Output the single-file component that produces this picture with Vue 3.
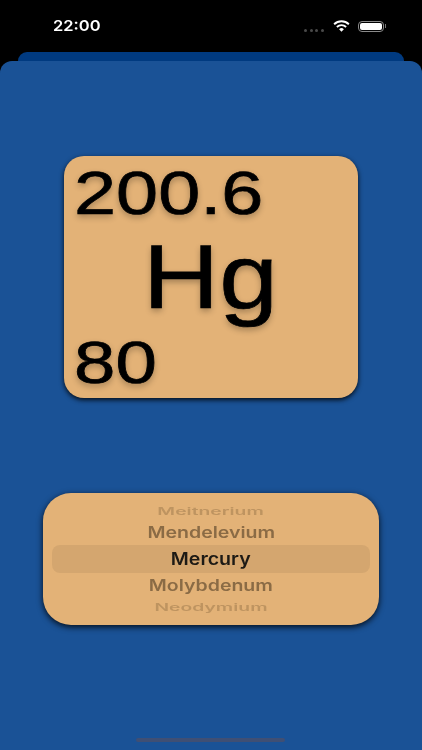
<script setup>
const rows = [
  { name: 'Meitnerium', cls: 'far top' },
  { name: 'Mendelevium', cls: 'near' },
  { name: 'Mercury', cls: 'picked' },
  { name: 'Molybdenum', cls: 'near low' },
  { name: 'Neodymium', cls: 'far bottom' }
]
</script>

<template>
  <div class="screen">
    <!--status bar-->
    <div class="status">
      <span class="time">22:00</span>
      <div class="status-right">
        <div class="dots"><i></i><i></i><i></i><i></i></div>
        <svg class="wifi" width="17" height="12" viewBox="0 0 18 13">
          <path d="M1 4.6 A11.5 11.5 0 0 1 17 4.6" fill="none" stroke="#fff" stroke-width="2" />
          <path d="M4 7.6 A7.2 7.2 0 0 1 14 7.6" fill="none" stroke="#fff" stroke-width="2" />
          <path d="M6.4 10 A3.6 3.6 0 0 1 11.6 10 L9 12.6 Z" fill="#fff" />
        </svg>
        <div class="battery"><div class="level"></div></div>
        <div class="nub"></div>
      </div>
    </div>

    <!--stacked sheets-->
    <div class="back-sheet"></div>
    <div class="sheet">
      <div class="card">
        <span class="mass">200.6</span>
        <span class="symbol">Hg</span>
        <span class="number">80</span>
      </div>

      <div class="picker">
        <div v-for="r in rows" :key="r.name" class="row" :class="r.cls">
          <span>{{ r.name }}</span>
        </div>
      </div>

      <div class="home"></div>
    </div>
  </div>
</template>

<style>
body {
  margin: 0;
  background: #000;
}
</style>

<style scoped>
.screen {
  width: 422px;
  height: 750px;
  background: #000;
  display: flex;
  flex-direction: column;
  overflow: hidden;
}

.status {
  height: 52px;
  display: flex;
  justify-content: space-between;
  align-items: flex-start;
  padding: 17px 36px 0 53px;
  box-sizing: border-box;
}

.time {
  color: #fff;
  font-family: Inter, "Liberation Sans", sans-serif;
  font-size: 15px;
  font-weight: 600;
  line-height: 18px;
  display: inline-block;
  transform: scaleX(1.1);
  transform-origin: left center;
}

.status-right {
  display: flex;
  align-items: center;
  height: 18px;
}

.dots {
  display: flex;
  gap: 2.5px;
  margin-top: 9px;
  margin-right: 9px;
}

.dots i {
  width: 3px;
  height: 3px;
  border-radius: 50%;
  background: #4a4a4a;
}

.wifi {
  margin-right: 8px;
}

.battery {
  width: 22px;
  height: 7px;
  border: 1px solid #8a8a8a;
  border-radius: 4px;
  padding: 1px;
  box-sizing: content-box;
}

.level {
  width: 100%;
  height: 100%;
  background: #fff;
  border-radius: 2px;
}

.nub {
  width: 1.5px;
  height: 4px;
  background: #777;
  margin-left: 1px;
}

.back-sheet {
  height: 9px;
  margin: 0 18px;
  background: #003a80;
  border-radius: 10px 10px 0 0;
  flex-shrink: 0;
}

.sheet {
  flex: 1;
  position: relative;
  background: #1a5296;
  border-radius: 12px 12px 0 0;
  padding-top: 95px;
}

.card {
  width: 294px;
  height: 242px;
  margin-left: 64px;
  padding: 6px 0 0 10px;
  box-sizing: border-box;
  background: #e3b277;
  border-radius: 20px;
  box-shadow: 0 2px 5px rgba(0, 0, 0, 0.85);
  display: flex;
  flex-direction: column;
  align-items: flex-start;
  font-family: "Liberation Sans", Arial, sans-serif;
  color: #000;
  text-shadow: 0 3px 6px rgba(0, 0, 0, 0.3);
  -webkit-text-stroke: 0.7px #000;
}

.card span {
  transform-origin: left center;
}

.mass {
  font-size: 62px;
  line-height: 62px;
  transform: scaleX(1.22);
}

.symbol {
  font-size: 91px;
  line-height: 91px;
  margin: 7px 0 0 69px;
  transform: scaleX(1.16);
}

.number {
  font-size: 60px;
  line-height: 60px;
  margin-top: 11px;
  transform: scaleX(1.24);
}

.picker {
  width: 336px;
  height: 132px;
  margin: 95px 0 0 43px;
  padding: 11px 9px 0;
  box-sizing: border-box;
  background: #e3b277;
  border-radius: 28px;
  box-shadow: 0 2px 6px rgba(0, 0, 0, 0.85);
  display: flex;
  flex-direction: column;
  font-family: Inter, "Liberation Sans", sans-serif;
  font-weight: 600;
}

.row {
  display: flex;
  align-items: center;
  justify-content: center;
  white-space: nowrap;
}

.row span {
  display: inline-block;
  filter: blur(0.3px);
}

.top { height: 14px; }
.bottom { height: 20px; }
.near { height: 27px; }
.low { height: 24px; }

.far {
  font-size: 14px;
  color: rgba(60, 40, 20, 0.22);
}

.far span {
  transform: scale(1.38, 0.72);
}

.near {
  font-size: 16px;
  color: rgba(50, 35, 20, 0.5);
}

.near span {
  transform: scale(1.22, 0.95);
}

.picked {
  height: 28px;
  font-size: 17px;
  color: #1d1a15;
  background: rgba(90, 70, 50, 0.1);
  border-radius: 8px;
}

.picked span {
  transform: scaleX(1.15);
}

.home {
  position: absolute;
  left: 136px;
  bottom: 8px;
  width: 149px;
  height: 4px;
  border-radius: 2px;
  background: #3f4f74;
}
</style>
